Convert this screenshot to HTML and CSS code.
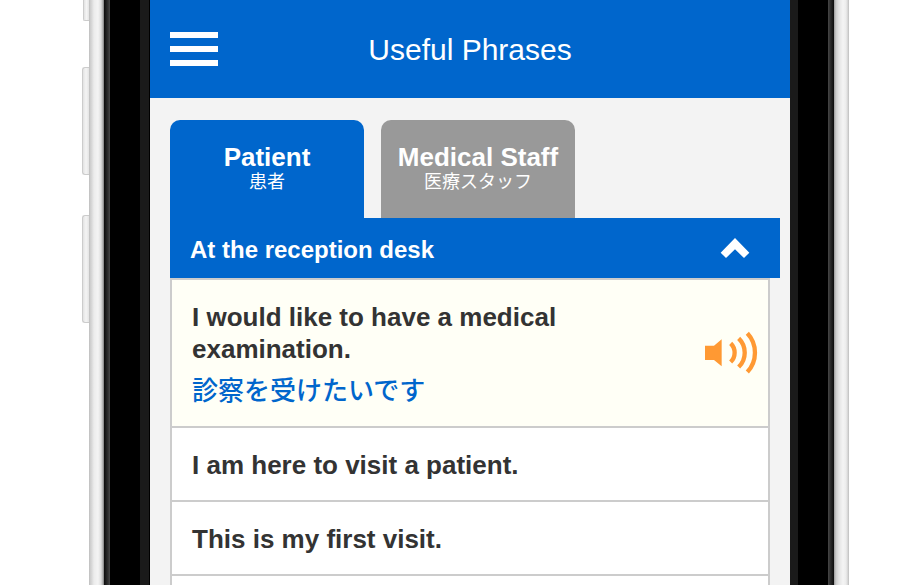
FILE: index.html
```
<!DOCTYPE html>
<html lang="en">
<head>
  <meta charset="UTF-8" />
  <meta name="viewport" content="width=device-width, initial-scale=1.0"/>
  <title>Useful Phrases</title>
  <link rel="stylesheet" href="styles.css">
</head>
<body>
  <div class="phone">
    <div class="side-buttons">
      <span class="side-button mute"></span>
      <span class="side-button volume-up"></span>
      <span class="side-button volume-down"></span>
    </div>
    <div class="frame frame-left"></div>

    <main class="screen">
      <header class="app-header">
        <button type="button" class="menu-btn" aria-label="Menu">
          <span></span>
          <span></span>
          <span></span>
        </button>
        <h1>Useful Phrases</h1>
      </header>

      <div class="content">
        <div class="tabs" role="tablist">
          <button type="button" class="tab active" role="tab" aria-selected="true">
            <span class="tab-name">Patient</span>
            <span class="tab-ja" lang="ja">患者</span>
          </button>
          <button type="button" class="tab" role="tab" aria-selected="false">
            <span class="tab-name">Medical Staff</span>
            <span class="tab-ja" lang="ja">医療スタッフ</span>
          </button>
        </div>

        <button type="button" class="section-btn" aria-expanded="true">
          <span class="section-name">At the reception desk</span>
          <svg class="chevron" viewBox="0 0 86 60" aria-hidden="true">
            <path d="M43 0 L86 44 L70 60 L43 34 L16 60 L0 44 Z" fill="#fff"/>
          </svg>
        </button>

        <ul class="phrases">
          <li class="phrase selected">
            <div class="phrase-text">
              <p>I would like to have a medical examination.</p>
              <p class="phrase-ja" lang="ja">診察を受けたいです</p>
            </div>
            <button type="button" class="sound-btn" aria-label="Play">
              <svg viewBox="0 0 159 129" aria-hidden="true">
                <path d="M0 44 H27 L50 25 V106 L27 87 H0 Z" fill="#ff9933"/>
                <g fill="none" stroke="#ff9933" stroke-width="13">
                  <path d="M77 37 A39 39 0 0 1 77 93"/>
                  <path d="M101 22 A60 60 0 0 1 101 108"/>
                  <path d="M127 7 A85 85 0 0 1 127 123"/>
                </g>
              </svg>
            </button>
          </li>
          <li class="phrase"><p>I am here to visit a patient.</p></li>
          <li class="phrase"><p>This is my first visit.</p></li>
          <li class="phrase"><p></p></li>
        </ul>
      </div>
    </main>

    <div class="frame frame-right"></div>
  </div>
</body>
</html>
```
FILE: styles.css
```
* {
  box-sizing: border-box;
}

body {
  margin: 0;
  background-color: #fff;
  color: #333;
  font-family: "Liberation Sans", Arial, "Noto Sans CJK JP", sans-serif;
}

button {
  border: none;
  padding: 0;
  background: none;
  color: inherit;
  font: inherit;
  cursor: pointer;
}

/* phone body */
.phone {
  display: flex;
  height: 100vh;
  padding: 0 51px 0 82px;
  overflow: hidden;
}

.side-buttons {
  display: flex;
  flex-direction: column;
  align-items: flex-end;
  width: 7px;
}

.side-button {
  flex: none;
  width: 7px;
  height: 108px;
  border: 1px solid #ccc;
  border-right: none;
  border-radius: 3px 0 0 3px;
  background: linear-gradient(to right, #e2e2e2, #f4f4f4 50%, #e4e4e4);
}

.mute {
  width: 6px;
  height: 21px;
  border-top: none;
  border-radius: 0 0 0 2px;
}

.volume-up {
  margin-top: 46px;
}

.volume-down {
  margin-top: 40px;
}

.frame {
  flex: none;
}

.frame-left {
  width: 61px;
  background: linear-gradient(to right,
    #bbb 0, #ccc 1px, #d2d2d2 2px, #ececec 5px, #f4f4f4 9px, #dedede 12px, #aaa 14px, #777 15px,
    #0c0c0c 15px, #303030 19px, #484848 21px,
    #000 21px, #000 51px,
    #1a1a1a 51px, #1a1a1a 60px,
    #000 60px);
}

.frame-right {
  width: 59px;
  background: linear-gradient(to right,
    #1a1a1a 0, #1a1a1a 8px,
    #000 8px, #000 38px,
    #484848 38px, #303030 40px, #0c0c0c 44px,
    #999 44px, #ccc 46px, #e4e4e4 49px, #f4f4f4 53px, #ececec 56px, #d2d2d2 58px, #bbb 59px);
}

/* app */
.screen {
  flex: 1;
  min-width: 0;
  overflow: hidden;
  background-color: #f3f3f3;
}

.app-header {
  display: grid;
  grid-template-columns: 48px 1fr 48px;
  align-items: center;
  height: 98px;
  padding: 0 20px;
  background-color: #0066cc;
  color: #fff;
}

.app-header h1 {
  margin: 0;
  padding-top: 2px;
  font-size: 30px;
  font-weight: normal;
  text-align: center;
}

.menu-btn {
  display: flex;
  flex-direction: column;
  gap: 8px;
}

.menu-btn span {
  width: 48px;
  height: 6px;
  background-color: #fff;
}

.content {
  padding: 22px 10px 0 20px;
}

.tabs {
  display: flex;
  gap: 17px;
}

.tab {
  display: flex;
  flex-direction: column;
  align-items: center;
  width: 194px;
  height: 98px;
  padding-top: 22px;
  border-radius: 10px 10px 0 0;
  background-color: #999;
  color: #fff;
  white-space: nowrap;
}

.tab.active {
  background-color: #0066cc;
}

.tab-name {
  font-size: 26px;
  font-weight: bold;
  line-height: 30px;
}

.tab-ja {
  font-size: 18px;
  line-height: 20px;
}

.section-btn {
  display: flex;
  align-items: center;
  justify-content: space-between;
  width: 100%;
  height: 60px;
  padding: 0 30px 0 20px;
  background-color: #0066cc;
  color: #fff;
  font-size: 24px;
  font-weight: bold;
  line-height: 32px;
}

.section-name {
  padding-top: 4px;
}

.chevron {
  width: 30px;
  height: 20px;
}

.phrases {
  margin: 0 10px 0 0;
  padding: 0;
  border: 2px solid #ccc;
  list-style: none;
}

.phrase {
  display: flex;
  align-items: center;
  justify-content: space-between;
  min-height: 74px;
  padding: 21px 10px 19px 20px;
  border-bottom: 2px solid #ccc;
  background-color: #fff;
  font-size: 26px;
  font-weight: bold;
  line-height: 32px;
}

.phrase.selected {
  background-color: #fffff6;
}

.phrase p {
  margin: 0;
}

.phrase-text {
  max-width: 440px;
}

.phrase .phrase-ja {
  margin-top: 10px;
  color: #0066cc;
  font-weight: 500;
}

.sound-btn {
  margin-bottom: 3px;
}

.sound-btn svg {
  display: block;
  width: 53px;
  height: 43px;
}
```
